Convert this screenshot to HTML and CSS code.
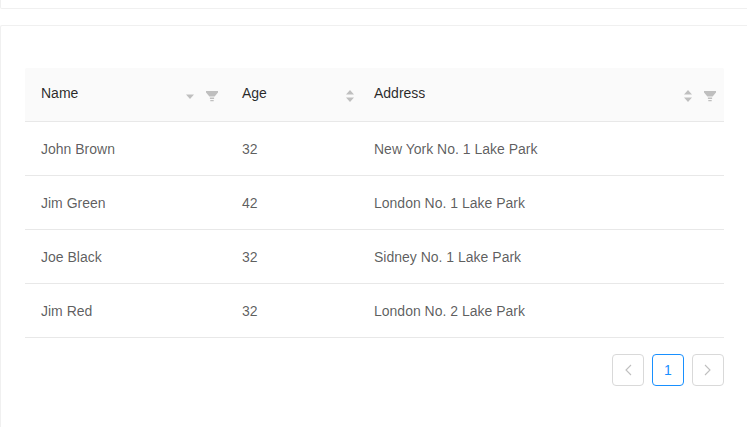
FILE: index.html
```html
<!DOCTYPE html>
<html lang="en">
<head>
<meta charset="utf-8">
<title>Table</title>
<link rel="stylesheet" href="styles.css">
</head>
<body>
<div class="card card-top"></div>
<div class="card card-main">
  <table class="table">
    <colgroup><col class="c-name"><col class="c-age"><col class="c-addr"></colgroup>
    <thead>
      <tr>
        <th><div class="th-in"><span class="th-title">Name</span>
          <svg class="sorter one" width="10" height="12" viewBox="0 0 10 12"><path class="s-i" d="M1 4.5h8L5 9z"/></svg>
          <span class="filter-slot"><svg width="12" height="12" viewBox="0 0 12 12"><path class="s-f" d="M0 1h12v1.5L8.6 6.4H3.4L0 2.500zM3.900 7.500h4.200V9H3.900zM4.300 10h3.400v1.300H4.300z"/></svg></span></div></th>
        <th><div class="th-in"><span class="th-title">Age</span>
          <svg class="sorter last" width="10" height="14" viewBox="0 0 10 14"><path class="s-i" d="M5 1l4 4.500H1zM1 8.500h8L5 13z"/></svg></div></th>
        <th><div class="th-in"><span class="th-title">Address</span>
          <svg class="sorter" width="10" height="14" viewBox="0 0 10 14"><path class="s-i" d="M5 1l4 4.500H1zM1 8.500h8L5 13z"/></svg>
          <span class="filter-slot"><svg width="12" height="12" viewBox="0 0 12 12"><path class="s-f" d="M0 1h12v1.500L8.600 6.400H3.400L0 2.500zM3.900 7.500h4.200V9H3.900zM4.300 10h3.400v1.300H4.300z"/></svg></span></div></th>
      </tr>
    </thead>
    <tbody>
      <tr><td>John Brown</td><td>32</td><td>New York No. 1 Lake Park</td></tr>
      <tr><td>Jim Green</td><td>42</td><td>London No. 1 Lake Park</td></tr>
      <tr><td>Joe Black</td><td>32</td><td>Sidney No. 1 Lake Park</td></tr>
      <tr><td>Jim Red</td><td>32</td><td>London No. 2 Lake Park</td></tr>
    </tbody>
  </table>
  <div class="pager">
    <button class="page nav" aria-label="Previous"><svg width="10" height="12" viewBox="0 0 10 12"><path d="M8 1L3 6l5 5" /></svg></button>
    <button class="page active">1</button>
    <button class="page nav" aria-label="Next"><svg width="10" height="12" viewBox="0 0 10 12"><path d="M2 1l5 5-5 5" /></svg></button>
  </div>
</div>
</body>
</html>
```
FILE: styles.css
```css
* { box-sizing: border-box; }
html, body { margin: 0; padding: 0; height: 427px; overflow: hidden; background: #fff; }
body { font-family: "Liberation Sans", Arial, sans-serif; font-size: 14px; color: rgba(0,0,0,.65); }
.card { width: 800px; background: #fff; border: 1px solid #f0f0f0; border-right: 0; border-radius: 2px 0 0 2px; }
.card-top { height: 9px; border-top: 0; border-radius: 0 0 0 2px; }
.card-main { margin-top: 16px; height: 420px; border-bottom: 0; padding: 42px 0 0 24px; }
.table { width: 699px; table-layout: fixed; border-collapse: separate; border-spacing: 0; }
.c-name { width: 201px; }
.c-age { width: 132px; }
.c-addr { width: 366px; }
th { height: 54px; padding: 0 0 0 16px; background: #fafafa; border-bottom: 1px solid #e8e8e8; color: rgba(0,0,0,.85); font-weight: 400; text-align: left; }
th:first-child { border-radius: 2px 0 0 0; }
th:last-child { border-radius: 0 2px 0 0; }
.th-in { display: flex; align-items: center; height: 53px; }
.th-title { flex: 1; line-height: 53px; position: relative; top: -1px; }
.sorter { display: block; flex: none; margin-top: 3px; }
.sorter.last { margin-right: 3px; }
.filter-slot { display: flex; flex: none; align-items: center; justify-content: center; width: 28px; height: 53px; padding-top: 3px; margin-left: 3px; margin-right: 0; }
.s-i { fill: #bfbfbf; }
.s-f { fill: #bfbfbf; }
td { height: 54px; padding: 0 0 0 16px; border-bottom: 1px solid #e8e8e8; line-height: 20px; }
.pager { display: flex; justify-content: flex-end; gap: 8px; width: 699px; margin-top: 16px; }
.page { width: 32px; height: 32px; padding: 0; display: flex; align-items: center; justify-content: center; background: #fff; border: 1px solid #d9d9d9; border-radius: 4px; font: inherit; }
.page.active { border-color: #1890ff; color: #1890ff; }
.nav svg { fill: none; stroke: #bfbfbf; stroke-width: 1.1; }
```
